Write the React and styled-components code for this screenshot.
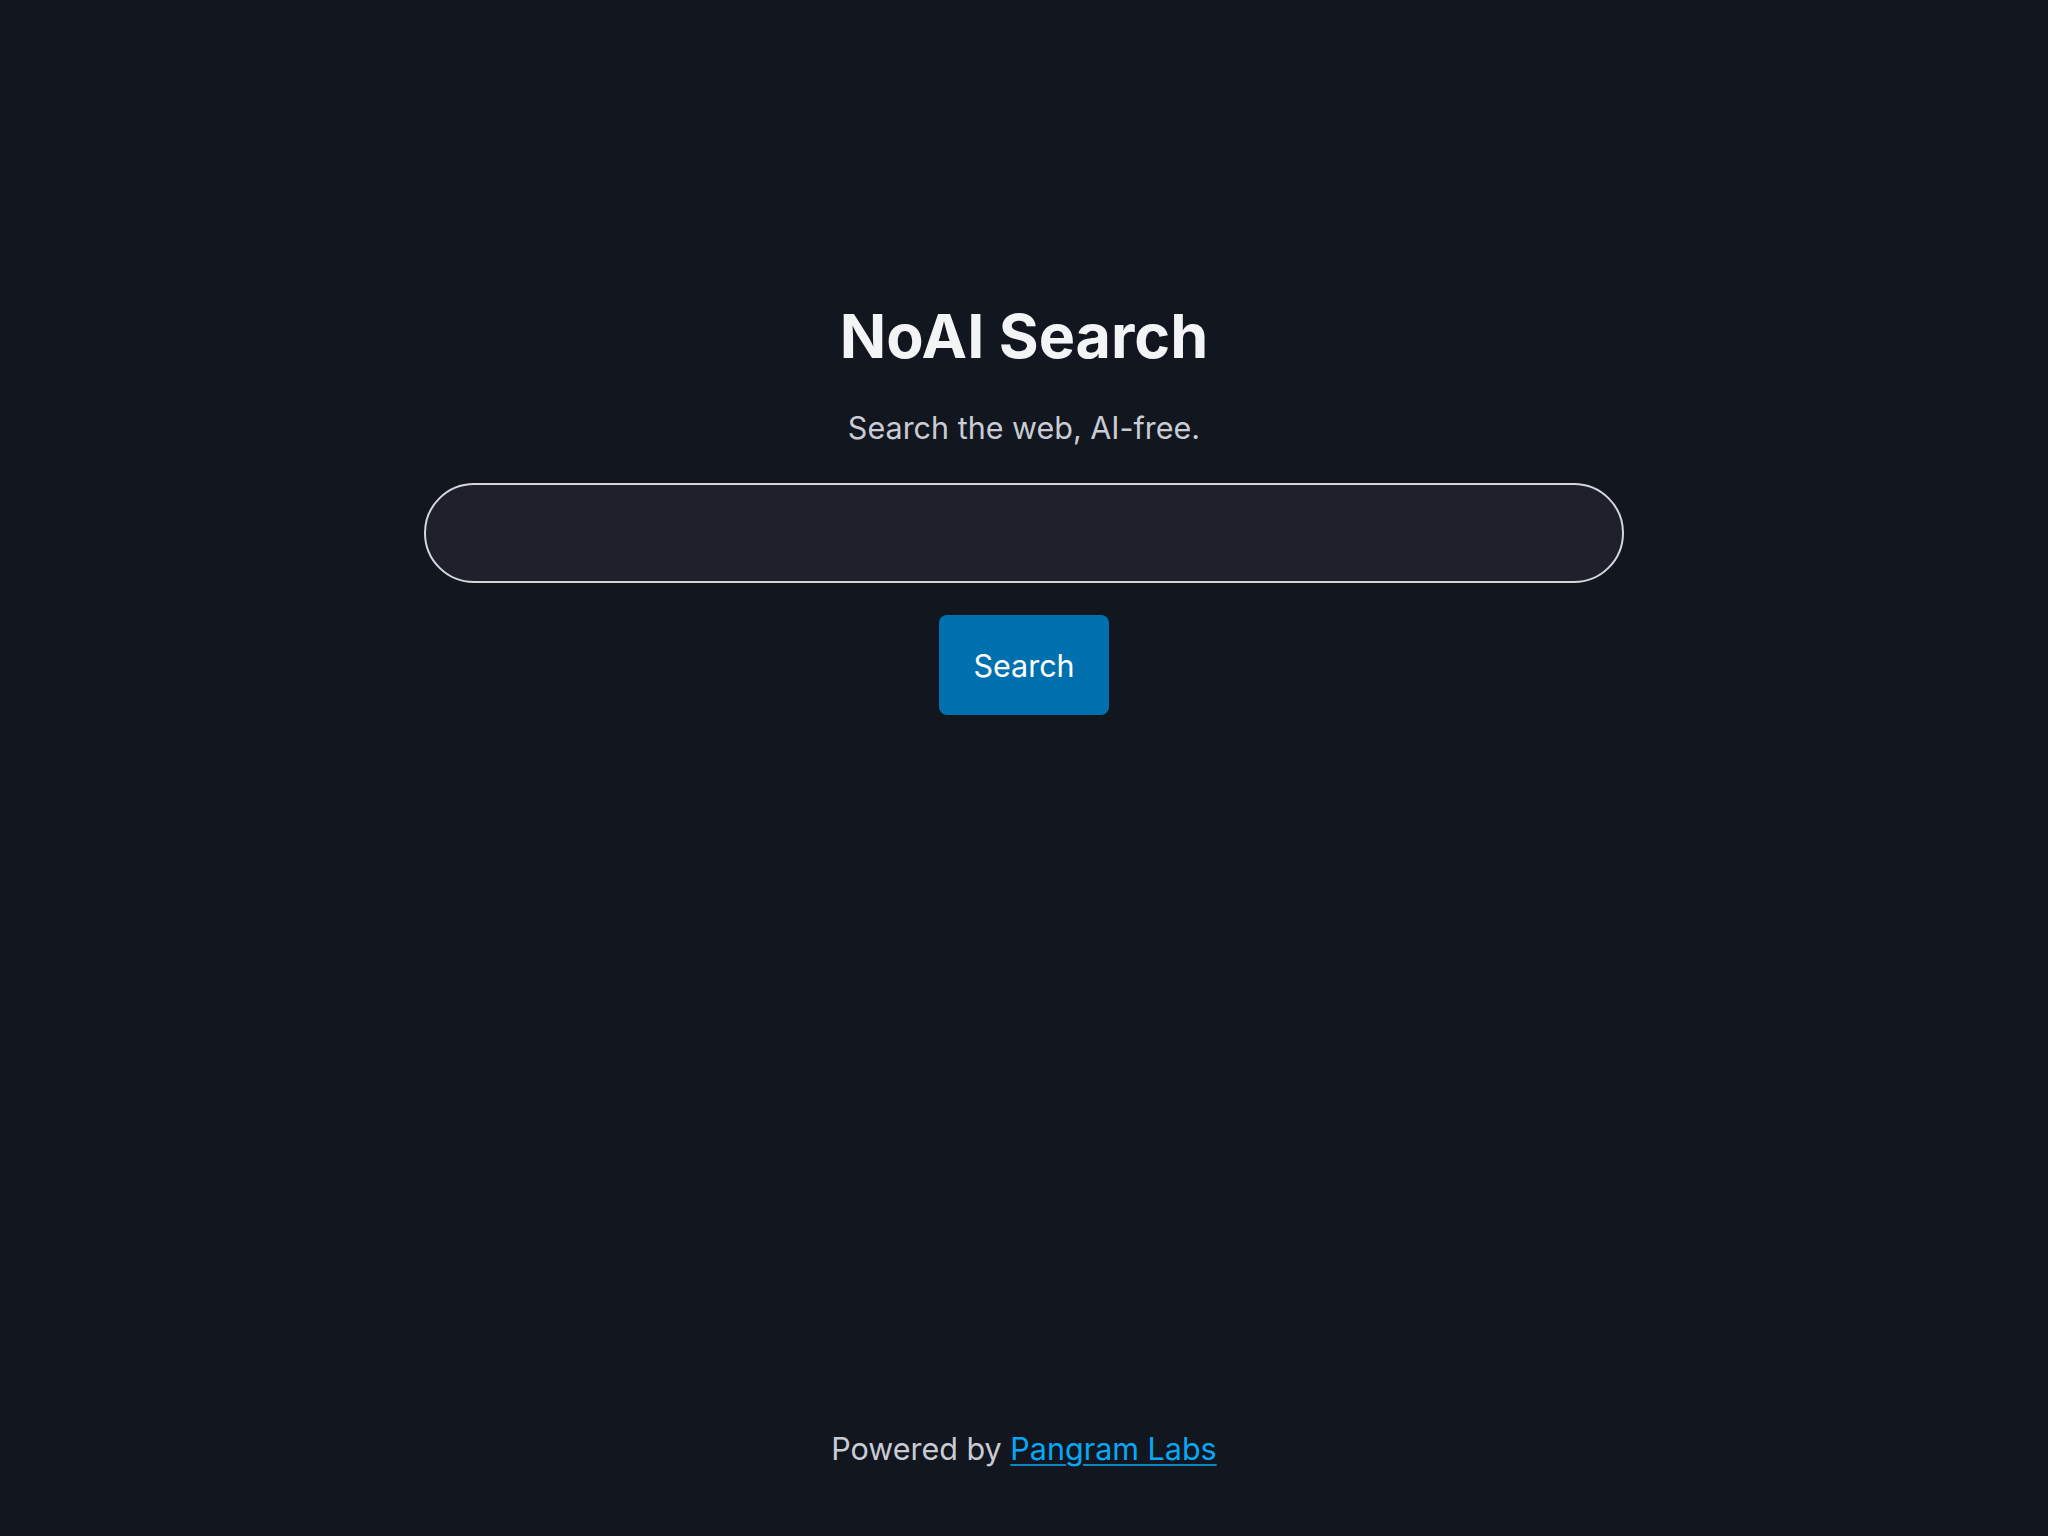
import React from 'react';
import styled, { createGlobalStyle } from 'styled-components';

const GlobalStyle = createGlobalStyle`
  html, body {
    margin: 0;
    padding: 0;
    background: #12161f;
  }
  body {
    font-family: Inter, "Noto Sans", sans-serif;
  }
`;

const Page = styled.div`
  min-height: 100vh;
  display: flex;
  flex-direction: column;
  align-items: center;
  box-sizing: border-box;
`;

const Main = styled.main`
  display: flex;
  flex-direction: column;
  align-items: center;
  padding-top: 298px;
  width: 100%;
`;

const Title = styled.h1`
  margin: 0;
  font-size: 61px;
  line-height: 76px;
  font-weight: 700;
  color: #f3f4f6;
`;

const Subtitle = styled.p`
  margin: 34px 0 0;
  font-size: 30.5px;
  line-height: 40px;
  color: #c9ccd4;
`;

const SearchForm = styled.form`
  display: flex;
  flex-direction: column;
  align-items: center;
  gap: 32px;
  margin-top: 35px;
  width: 1200px;
`;

const SearchInput = styled.input`
  width: 100%;
  height: 100px;
  box-sizing: border-box;
  border: 2px solid #d4d6dc;
  border-radius: 50px;
  background: #1e212c;
  color: #f3f4f6;
  font-size: 30px;
  font-family: inherit;
  padding: 0 40px;
  outline: none;
`;

const SearchButton = styled.button`
  width: 170px;
  height: 100px;
  border: none;
  border-radius: 8px;
  background: #0071ae;
  color: #ffffff;
  font-family: inherit;
  font-size: 30.5px;
  cursor: pointer;
`;

const Footer = styled.footer`
  margin-top: auto;
  padding-bottom: 67px;
  font-size: 30.5px;
  line-height: 40px;
  color: #c9ccd4;
`;

const Link = styled.a`
  color: #07a8f5;
  text-decoration: underline;
  text-decoration-thickness: 2px;
  text-underline-offset: 4px;
  text-decoration-color: #0a86c4;
`;

const App = () => (
  <Page>
    <GlobalStyle />
    <Main>
      <Title>NoAI Search</Title>
      <Subtitle>Search the web, AI-free.</Subtitle>
      <SearchForm onSubmit={(e) => e.preventDefault()}>
        <SearchInput type="text" aria-label="Search" />
        <SearchButton type="submit">Search</SearchButton>
      </SearchForm>
    </Main>
    <Footer>
      Powered by <Link href="#">Pangram Labs</Link>
    </Footer>
  </Page>
);

export default App;
